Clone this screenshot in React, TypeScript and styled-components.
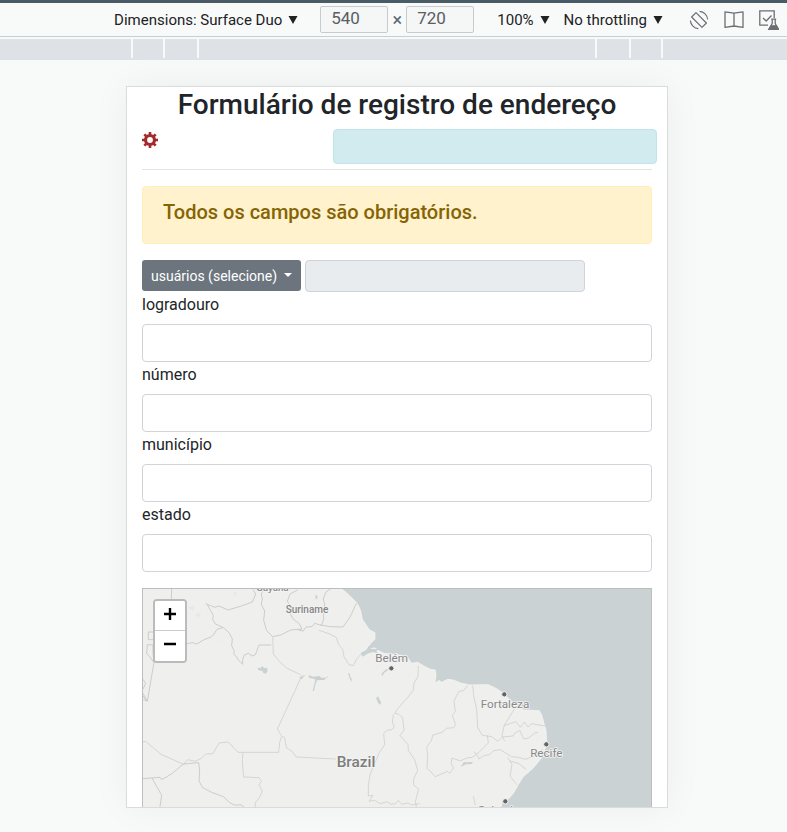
import React from "react";
import styled, { createGlobalStyle } from "styled-components";

const GlobalStyle = createGlobalStyle`
  *, *::before, *::after { box-sizing: border-box; }
  body {
    margin: 0;
    background: #f8faf9;
    color: #212529;
    font-family: Roboto, "Liberation Sans", sans-serif;
    font-size: 16px;
    line-height: 26px;
  }
  button, input { font-family: inherit; margin: 0; }
`;

const Page = styled.div`
  min-height: 100vh;
  display: flex;
  flex-direction: column;
  overflow: hidden;
`;

const Toolbar = styled.header`
  display: flex;
  align-items: center;
  justify-content: flex-end;
  height: 37px;
  padding: 0 8px 0 0;
  border-top: 3px solid #4b5b65;
  border-bottom: 1px solid #c9ced4;
  background: #f8faf9;
`;

const ToolGroup = styled.div<{ $gap: number; $after: number }>`
  display: flex;
  align-items: center;
  flex: none;
  gap: ${(p) => p.$gap}px;
  margin-right: ${(p) => p.$after}px;
`;

const MenuButton = styled.button`
  display: flex;
  align-items: center;
  gap: 6px;
  padding: 0;
  border: 0;
  background: none;
  color: #202124;
  font-size: 15px;
  line-height: 20px;
  white-space: nowrap;
`;

const SizeInput = styled.input`
  width: 68px;
  height: 27px;
  padding: 0 10px 4px;
  border: 1px solid #c8cbcd;
  border-radius: 2px;
  background: #f5f6f6;
  color: #5a5d61;
  font-size: 17px;
`;

const Times = styled.span`
  width: 10px;
  color: #5b6b7c;
  font-size: 18px;
  line-height: 20px;
  text-align: center;
`;

const IconButton = styled.button`
  display: flex;
  padding: 0;
  border: 0;
  background: none;
  color: #6b6f72;
`;

const Ruler = styled.div`
  display: flex;
  justify-content: center;
  height: 21px;
  margin-top: 2px;
  padding-left: 7px;
  background: #dee1e6;
`;

const RulerSegment = styled.div<{ $width: number; $last?: boolean }>`
  width: ${(p) => p.$width}px;
  height: 19px;
  border-left: 2px solid #f8faf9;
  border-right: ${(p) => (p.$last ? "2px solid #f8faf9" : "0")};
`;

const Stage = styled.main`
  flex: 1;
  display: flex;
  justify-content: center;
  padding: 26px 0 24px 7px;
`;

const Device = styled.section`
  width: 100%;
  max-width: 542px;
  height: 722px;
  padding: 0 15px;
  overflow: hidden;
  border: 1px solid #dadcdc;
  background: #fff;
  box-shadow: 0 0 36px rgba(0, 0, 0, 0.05);
`;

const Title = styled.h1`
  margin: 0 0 6px;
  font-size: 28px;
  font-weight: 500;
  line-height: 36px;
  text-align: center;
`;

const StatusRow = styled.div`
  display: flex;
  justify-content: space-between;
  align-items: flex-start;
  margin-right: -5px;
`;

const SettingsLink = styled.a`
  display: flex;
  padding-top: 3px;
  color: #a52a2a;
`;

const InfoBox = styled.div`
  width: 324px;
  height: 35px;
  border: 1px solid #bee5eb;
  border-radius: 4px;
  background: #d1ebef;
`;

const Divider = styled.hr`
  margin: 5px 0 16px;
  border: 0;
  border-top: 1px solid #e3e3e3;
`;

const Warning = styled.div`
  margin-bottom: 16px;
  padding: 12px 20px 18px;
  border: 1px solid #ffeeba;
  border-radius: 4px;
  background: #fff2cd;
  color: #856404;
`;

const WarningTitle = styled.h2`
  margin: 0;
  font-size: 20px;
  font-weight: 500;
  line-height: 26px;
`;

const UserRow = styled.div`
  display: flex;
  align-items: flex-start;
  gap: 4px;
`;

const UserButton = styled.button`
  display: flex;
  align-items: center;
  gap: 7px;
  height: 31px;
  padding: 2px 9px 0;
  border: 0;
  border-radius: 3px;
  background: #6c757d;
  color: #fff;
  font-size: 14px;
  line-height: 21px;
  white-space: nowrap;
`;

const Caret = styled.span`
  margin-bottom: 4px;
  border-top: 4px solid currentColor;
  border-left: 4px solid transparent;
  border-right: 4px solid transparent;
`;

const UserName = styled.input`
  width: 280px;
  height: 32px;
  border: 1px solid #ced4da;
  border-radius: 4px;
  background: #e9ecef;
`;

const Field = styled.div`
  display: flex;
  flex-direction: column;
  gap: 6px;
`;

const TextInput = styled.input`
  width: 100%;
  height: 38px;
  padding: 6px 12px;
  border: 1px solid #ced4da;
  border-radius: 4px;
  background: #fff;
  font-size: 16px;
`;

const MapFrame = styled.div`
  position: relative;
  height: 300px;
  margin-top: 16px;
  border: 1px solid #bdbdbd;
  background: #cad2d3;
`;

const MapDrawing = styled.svg`
  display: block;
  width: 100%;
  height: 100%;
`;

const ZoomControl = styled.div`
  position: absolute;
  top: 10px;
  left: 10px;
  display: flex;
  flex-direction: column;
  overflow: hidden;
  border: 2px solid #bbb;
  border-radius: 4px;
  background: #fff;
`;

const ZoomButton = styled.button`
  width: 30px;
  height: 30px;
  padding: 0;
  border: 0;
  background: #fff;
  color: #000;
  &:first-child {
    border-bottom: 1px solid #ccc;
  }
  svg { display: block; margin: 0 auto 4px; }
`;

const MapLabel = styled.text<{ $size: number; $color: string; $weight?: number }>`
  fill: ${(p) => p.$color};
  stroke: #f4f4f3;
  stroke-width: 5px;
  stroke-linejoin: round;
  paint-order: stroke;
  font-family: Roboto, sans-serif;
  font-size: ${(p) => p.$size}px;
  font-weight: ${(p) => p.$weight ?? 400};
  text-anchor: middle;
`;

const Triangle = () => (
  <svg width="10" height="8" viewBox="0 0 10 8" aria-hidden="true">
    <path d="M0.5 0h9L5 8z" fill="#202124" />
  </svg>
);

const RotateIcon = () => (
  <svg width="20" height="20" viewBox="0 0 20 20" fill="none" stroke="currentColor" strokeWidth="1.2" aria-hidden="true">
    <path d="M7 2.6 17.4 13 13 17.4 2.6 7z" strokeLinejoin="round" />
    <path d="M10.6 1.4A8.6 8.6 0 0 1 18.6 9.4M9.4 18.6A8.6 8.6 0 0 1 1.4 10.6" />
  </svg>
);

const PostureIcon = () => (
  <svg width="20" height="20" viewBox="0 0 20 20" fill="none" stroke="currentColor" strokeWidth="1.3" aria-hidden="true">
    <path d="M1 1.8 10 3.2 19 1.8V17.4L10 16 1 17.4zM10 3.2V16" strokeLinejoin="round" />
  </svg>
);

const ExperimentIcon = () => (
  <svg width="20" height="20" viewBox="0 0 20 20" fill="none" stroke="currentColor" strokeWidth="1.3" aria-hidden="true">
    <path d="M9 15.2H.8V.8H15.2V8M4 8l3.2 3L12.5 5.5" />
    <path d="M12.2 9.2h5M13.2 9.5v4L9.9 19.3h9.5L16.2 13.5v-4" />
    <path d="M12 15.8h5.4l2 3.5H9.9z" fill="currentColor" />
  </svg>
);

const CogIcon = () => (
  <svg width="16" height="16" viewBox="0 0 16 16" fill="none" stroke="currentColor" aria-hidden="true">
    <circle cx="8" cy="8" r="4.5" strokeWidth="3.2" />
    <path
      d="M8 0V3M8 13V16M0 8H3M13 8H16M2.3 2.3l2.2 2.2M11.5 11.5l2.2 2.2M2.3 13.7l2.2-2.2M11.5 4.5l2.2-2.2"
      strokeWidth="2.6"
    />
  </svg>
);

const LAND =
  "M60 20H655L677 36 692 50 708 66 715 76 722 92 727 118 735 130 748 149 765 158V178L752 190 741 207 724 222 745 210 763 203 778 213 792 220 812 222 845 226 862 232 875 250 893 247 910 257 931 268 946 270 948 285 945 310 958 301 965 307 983 298 1000 300 1022 309 1050 315 1078 314 1105 314 1128 325 1145 336 1160 350 1184 372 1210 390 1235 391 1258 392 1265 404 1272 430 1278 450 1280 488 1276 505 1266 532 1240 564 1210 590 1196 612 1180 640 1166 656 1150 662 1144 681 1132 720V1000H60z";

const WATER = [
  "M412 263l10 1 5-6 5 6 9-1 2 9-5 9-9-3-1-5-12-2z",
  "M536 290l11 1 9-7-6 8-5 6z",
  "M566 286l14 4 19-2 4 5 13 0 11-6-15 13-21 1-5 14-4 18h-4l5-21 3-14-19-5z",
  "M684 280l5 0 2 10 4 7 0 9-5-8z",
  "M768 354l7-5 3 9 5 7-1 9-7-4z",
  "M722 219l18-10 6-12 7 10 24 0-8 6 5 9-13-6-16 4-17 10z",
  "M784 281l15-14 6 2-13 10-4 9z",
  "M586 45l6 2 0 9-5 2z",
  "M1023 559l8-12 28-1-4 6-18 1-10 6z",
  "M1144 684l6-25 6-4 0 9-5 20z",
];

const BORDERS = [
  "M69 485l9 0 45 38 68 30 12-14 22 5 18-8 14-14 22-1 18-32 27-3 8 6 10 13 13 12H476l3-30 6-18 9 4 5 30 18 12 12 16 118 6",
  "M554 287l-9 1-37 81-36 78 12 20",
  "M369 518l-2 28 4 45 46 2 7 11-7 11 10 18-8 19-13 16v15",
  "M895 257l-1 32-12 20-2 21-18 24-10 10-20 24-8 12 13 3 11 11 4 37-12 15 24 28 1 17 19 28 9 32-12 26 0 18 15 12-10 38 5 25",
  "M820 404l-3 22 6 15-10 9-10 0-12 10 3 34-16 24-19 44-9 22-5 34 0 30 14-2-12 18 16-3 18 10 20-6 12 8 14-2 8-10 10 12 18-4 12 6 24-4",
  "M1044 315l-12 16-16 4-14 28 4 31-9 13 10 27-6 9-22 2-13 12-28 8-3 15-15 22 3 27-2 36 15 14 9 11 38-16 6 6 12-16-8-14 3-16 26 9 17-9 18-2 20-15 28-28-3-23",
  "M1058 316l3 31 9 42 3 53 14 24 28 4 19 14 13-13 32-3 7-10 14-6 11 25 15-3 18-15 10-2M1185 384l-16 26-17 27 18-6 18-6 13 17 12-16 11 15 10-10 46 8",
  "M1152 438l-6 28 8 18M1062 515l12 14 2 8 16-10 17-3 12-12 20-3 18 11 15 10 22 2 20 6 28-10 12-6 12-15",
  "M1163 533l13 20-6 35 15 20 6 6M1170 543l27 8 22 18M1060 648l6 28",
  "M458 172l2 50 18 22 22 20 18 9 24 11M597 151l30 10 22 11 7 22 12 14 4 22 15 24 13 3 10-20 16-18",
];

const COUNTRY_BORDERS = [
  "M69 596l51-4 4 6 14-6 20-13 32-27 46-4 3 25-2 30 11 20 27 14 35 13 18 17 14 8h22l12 9",
  "M96 594l29 52-6 40",
  "M155 27l-1 32M200 191l17-3 13 4 22-13 23-9 7-8 9-14 17-5",
  "M257 71l28 11 12-4 27 12 24-7 19-6 30-11 10-24-8-14M262 74l10 18 8 15-2 11 8 14 24 11 18 16 9 18-2 20 8 17-2 8 9 9 4 8 14 14 0-14 5-14 12-5 12 8 9-4 5-13 6-16h37",
  "M432 27l-8 15 3 15-3 16 10 20-3 28 9 31 18 18 24-5 30-15 34-3-8-16-18-13-11-20 3-19-10-15 8-22 23-12",
  "M535 150l15 3 8-12 18-1 8-10 20 6 7-17 0-23 3-22-4-17 7-20 27-19M602 135l29 5 38 1 18-25 8-15 14-31",
  "M85 156h16v23H85zM82 194l17 1v23l3 29-20 117-13-16M82 194l-2 27 10 10 12 17M69 298l8 12-8 17M69 340l12 22-11-3",
];

const CITIES: [number, number][] = [[814, 265], [1153, 343], [1279, 493], [1156, 664]];

const FIELDS = ["logradouro", "número", "município", "estado"];

const CoastMap = () => (
  <MapDrawing viewBox="69 27 1524 894" preserveAspectRatio="xMinYMin slice" role="img" aria-label="Brazil">
    <path d={LAND} fill="#efefee" stroke="#f7f7f6" strokeWidth="2" />
    <path
      d="M205 82l17-6-4 16zM225 103l18-4-7 13zM340 36l12 4-6 8zM258 180l20-5M300 185h15"
      fill="#e6e7e8"
      stroke="#ebebeb"
      strokeWidth="2"
    />
    {WATER.map((d) => <path key={d} d={d} fill="#c9d1d3" />)}
    {BORDERS.map((d) => (
      <path key={d} d={d} fill="none" stroke="#cfd0cf" strokeWidth="2.5" strokeLinejoin="round" />
    ))}
    {COUNTRY_BORDERS.map((d) => (
      <path key={d} d={d} fill="none" stroke="#c4c5c4" strokeWidth="2.5" strokeLinejoin="round" />
    ))}
    {CITIES.map(([x, y]) => (
      <circle key={x} cx={x} cy={y} r="8" fill="#646467" stroke="#f5f5f5" strokeWidth="3" />
    ))}
    <MapLabel x="457" y="34" $size={29} $color="#8b8b8b" $weight={500}>Guyana</MapLabel>
    <MapLabel x="561" y="100" $size={30} $color="#858585" $weight={500}>Suriname</MapLabel>
    <MapLabel x="815" y="247" $size={35} $color="#888">Belém</MapLabel>
    <MapLabel x="1155" y="383" $size={35} $color="#888">Fortaleza</MapLabel>
    <MapLabel x="1279" y="531" $size={35} $color="#888">Recife</MapLabel>
    <MapLabel x="1142" y="702" $size={35} $color="#888">Salvador</MapLabel>
    <MapLabel x="708" y="561" $size={46} $color="#7d7d7d" $weight={500}>Brazil</MapLabel>
  </MapDrawing>
);

export default function App() {
  return (
    <>
      <GlobalStyle />
      <Page>
        <Toolbar>
          <ToolGroup $gap={4} $after={23}>
            <ToolGroup $gap={0} $after={18}>
              <MenuButton>Dimensions: Surface Duo <Triangle /></MenuButton>
            </ToolGroup>
            <SizeInput aria-label="Width" defaultValue="540" />
            <Times>×</Times>
            <SizeInput aria-label="Height" defaultValue="720" />
          </ToolGroup>
          <ToolGroup $gap={14} $after={26}>
            <MenuButton>100% <Triangle /></MenuButton>
            <MenuButton>No throttling <Triangle /></MenuButton>
          </ToolGroup>
          <ToolGroup $gap={15} $after={0}>
            <IconButton aria-label="Rotate"><RotateIcon /></IconButton>
            <IconButton aria-label="Device posture"><PostureIcon /></IconButton>
            <IconButton aria-label="Experimental features"><ExperimentIcon /></IconButton>
          </ToolGroup>
        </Toolbar>
        <Ruler>
          <RulerSegment $width={32} />
          <RulerSegment $width={34} />
          <RulerSegment $width={398} />
          <RulerSegment $width={34} />
          <RulerSegment $width={34} $last />
        </Ruler>
        <Stage>
          <Device>
            <Title>Formulário de registro de endereço</Title>
            <StatusRow>
              <SettingsLink href="#" aria-label="Configurações"><CogIcon /></SettingsLink>
              <InfoBox role="status" />
            </StatusRow>
            <Divider />
            <Warning role="alert">
              <WarningTitle>Todos os campos são obrigatórios.</WarningTitle>
            </Warning>
            <form>
              <UserRow>
                <UserButton type="button">usuários (selecione) <Caret /></UserButton>
                <UserName aria-label="usuário" disabled />
              </UserRow>
              {FIELDS.map((name) => (
                <Field key={name}>
                  <label htmlFor={name}>{name}</label>
                  <TextInput id={name} name={name} />
                </Field>
              ))}
            </form>
            <MapFrame>
              <CoastMap />
              <ZoomControl>
                <ZoomButton aria-label="Zoom in">
                  <svg width="12" height="12" viewBox="0 0 12 12"><path d="M4.8 0h2.4v4.8H12v2.4H7.2V12H4.8V7.2H0V4.8h4.8z" /></svg>
                </ZoomButton>
                <ZoomButton aria-label="Zoom out">
                  <svg width="12" height="12" viewBox="0 0 12 12"><path d="M0 4.8h12v2.4H0z" /></svg>
                </ZoomButton>
              </ZoomControl>
            </MapFrame>
          </Device>
        </Stage>
      </Page>
    </>
  );
}
